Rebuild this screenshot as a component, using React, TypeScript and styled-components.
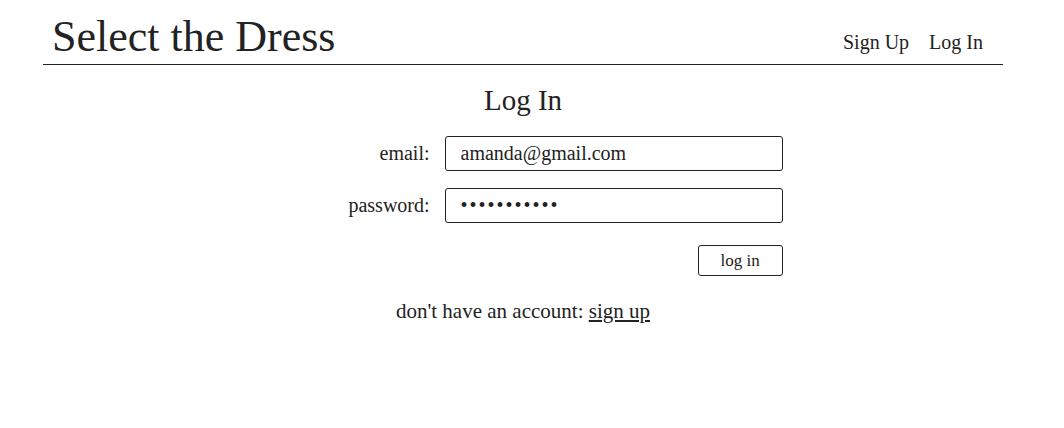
import styled, { createGlobalStyle } from "styled-components";

const GlobalStyle = createGlobalStyle`
    body {
        margin: 0;
        background: #ffffff;
        color: #222222;
        font-family: "Liberation Serif", "DejaVu Serif", serif;
    }
`;

const Page = styled.div`
    width: 960px;
    margin: 0 0 0 43px;
`;

const Header = styled.header`
    display: flex;
    justify-content: space-between;
    align-items: flex-end;
    padding: 13px 20px 3px 9px;
    border-bottom: 1px solid #222222;
`;

const Title = styled.h1`
    margin: 0;
    font-size: 44px;
    font-weight: 400;
    line-height: 48px;
`;

const Nav = styled.nav`
    display: flex;
    gap: 20px;
    padding-bottom: 7px;
`;

const NavLink = styled.a`
    font-size: 20px;
    color: #222222;
    text-decoration: none;
`;

const Main = styled.main`
    display: flex;
    flex-direction: column;
    align-items: center;
    padding-top: 18px;
`;

const Heading = styled.h2`
    margin: 0 0 19px;
    font-size: 29px;
    font-weight: 400;
    line-height: 34px;
`;

const Form = styled.form`
    display: grid;
    grid-template-columns: auto 338px;
    column-gap: 15px;
    row-gap: 17px;
    align-items: center;
    margin-left: 85px;
`;

const Label = styled.label`
    font-size: 20px;
    text-align: right;
`;

const Input = styled.input`
    box-sizing: border-box;
    width: 338px;
    height: 35px;
    padding: 0 15px;
    border: 1px solid #222222;
    border-radius: 3px;
    font-family: inherit;
    font-size: 20px;
    color: #222222;
    letter-spacing: ${(p) => (p.type === "password" ? "2px" : "0")};
`;

const ButtonRow = styled.div`
    grid-column: 2;
    display: flex;
    justify-content: flex-end;
    margin-top: 5px;
`;

const Button = styled.button`
    width: 85px;
    height: 31px;
    background: #ffffff;
    border: 1px solid #222222;
    border-radius: 3px;
    font-family: inherit;
    font-size: 17px;
    color: #222222;
`;

const Footer = styled.p`
    margin: 23px 0 0;
    font-size: 21px;
`;

const SignUpLink = styled.a`
    color: #222222;
    text-decoration: underline;
`;

export default function App() {
    return (
        <>
            <GlobalStyle />
            <Page>
                <Header>
                    <Title>Select the Dress</Title>
                    <Nav>
                        <NavLink href="#">Sign Up</NavLink>
                        <NavLink href="#">Log In</NavLink>
                    </Nav>
                </Header>
                <Main>
                    <Heading>Log In</Heading>
                    <Form onSubmit={(e) => e.preventDefault()}>
                        <Label htmlFor="email">email:</Label>
                        <Input id="email" type="text" defaultValue="amanda@gmail.com" />
                        <Label htmlFor="password">password:</Label>
                        <Input id="password" type="password" defaultValue="password123" />
                        <ButtonRow>
                            <Button type="submit">log in</Button>
                        </ButtonRow>
                    </Form>
                    <Footer>
                        don't have an account: <SignUpLink href="#">sign up</SignUpLink>
                    </Footer>
                </Main>
            </Page>
        </>
    );
}
